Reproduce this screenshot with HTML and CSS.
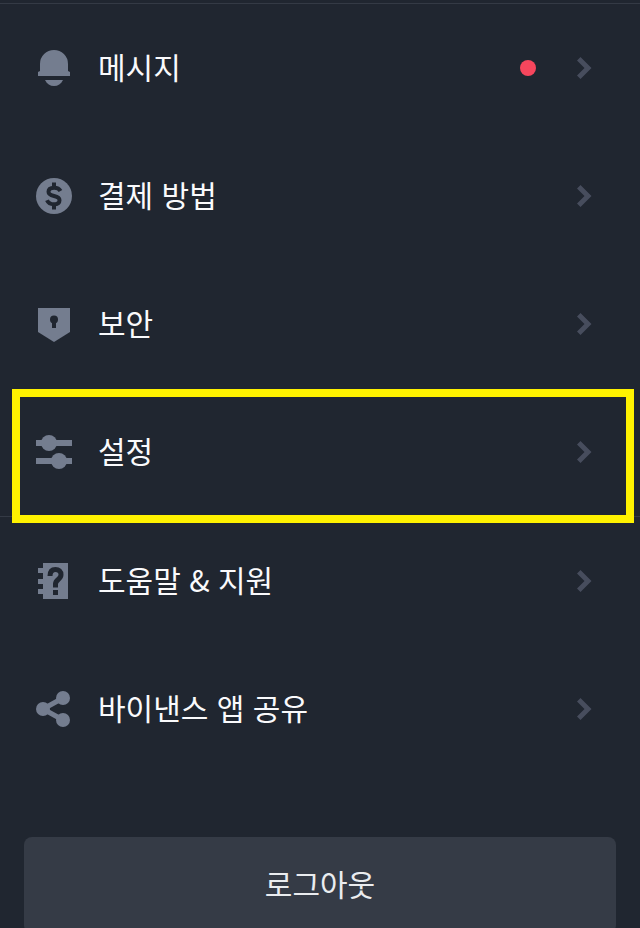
FILE: index.html
```html
<!DOCTYPE html>
<html lang="ko">
<head>
<meta charset="utf-8">
<meta name="viewport" content="width=device-width, initial-scale=1">
<title>메뉴</title>
<link rel="stylesheet" href="styles.css">
</head>
<body>
<main class="screen">
  <nav class="menu">
    <div class="group">
      <a class="row" href="#">
        <svg class="icon" viewBox="0 0 36 36" aria-hidden="true"><path d="M4 14a14 14 0 0 1 28 0v7l2 1v4H2v-4l2-1z"/><path d="M9 30h18c-2 4-5 6-9 6s-7-2-9-6z"/></svg>
        <span class="label">메시지</span>
        <span class="dot"></span>
        <svg class="chevron" viewBox="0 0 16 24" aria-hidden="true"><path d="M1 4.500 4.500 1l11 11-11 11L1 19.500 8.500 12z"/></svg>
      </a>
      <a class="row" href="#">
        <svg class="icon" viewBox="0 0 36 36" aria-hidden="true"><circle cx="18" cy="18" r="18"/><path class="cut-line thin" d="M24.500 13C23.300 10.700 21 9.700 18.200 9.700c-3.500 0-5.700 1.500-5.700 4 0 6 11 2.600 11 8.500 0 2.600-2.200 4.100-5.700 4.100-3.300 0-5.600-1.300-6.800-4"/><path class="cut" d="M16 4.500h4V9h-4zM16 27h4v4.500h-4z"/></svg>
        <span class="label">결제 방법</span>
        <svg class="chevron" viewBox="0 0 16 24" aria-hidden="true"><path d="M1 4.500 4.500 1l11 11-11 11L1 19.500 8.500 12z"/></svg>
      </a>
      <a class="row" href="#">
        <svg class="icon" viewBox="0 0 36 36" aria-hidden="true"><path d="M2 2h32v24L18 36 2 26z"/><circle class="cut" cx="18" cy="13.500" r="4"/><path class="cut" d="M16 14h4v8h-4z"/></svg>
        <span class="label">보안</span>
        <svg class="chevron" viewBox="0 0 16 24" aria-hidden="true"><path d="M1 4.500 4.500 1l11 11-11 11L1 19.500 8.500 12z"/></svg>
      </a>
      <a class="row highlighted" href="#">
        <svg class="icon" viewBox="0 0 36 36" aria-hidden="true"><path d="M0 6h36v6H0zM0 24h36v6H0z"/><circle cx="13" cy="9" r="8"/><circle cx="23" cy="27" r="8"/></svg>
        <span class="label">설정</span>
        <svg class="chevron" viewBox="0 0 16 24" aria-hidden="true"><path d="M1 4.500 4.500 1l11 11-11 11L1 19.500 8.500 12z"/></svg>
      </a>
    </div>
    <div class="group">
      <a class="row" href="#">
        <svg class="icon" viewBox="0 0 36 36" aria-hidden="true"><path d="M7 0h25v36H7v-5H2v-5h5v-5H2v-5h5v-6H2V5h5z"/><path class="cut-line" d="M14 13c0-4.500 2.200-6.500 5.500-6.500S25 8.500 25 11.800c0 4.700-5.500 4.700-5.500 9.200v3.500"/><path class="cut" d="M17 27h5v5h-5z"/></svg>
        <span class="label">도움말 &amp; 지원</span>
        <svg class="chevron" viewBox="0 0 16 24" aria-hidden="true"><path d="M1 4.500 4.500 1l11 11-11 11L1 19.500 8.500 12z"/></svg>
      </a>
      <a class="row" href="#">
        <svg class="icon" viewBox="0 0 36 36" aria-hidden="true"><path class="link" d="M27 7 7 18l20 11"/><circle cx="7" cy="18" r="7"/><circle cx="27" cy="7" r="7"/><circle cx="27" cy="29" r="7"/></svg>
        <span class="label">바이낸스 앱 공유</span>
        <svg class="chevron" viewBox="0 0 16 24" aria-hidden="true"><path d="M1 4.500 4.500 1l11 11-11 11L1 19.500 8.500 12z"/></svg>
      </a>
    </div>
  </nav>
  <button class="logout" type="button">로그아웃</button>
</main>
</body>
</html>
```
FILE: styles.css
```css
:root {
  --background: #202630;
  --surface: #353b46;
  --divider: #343a45;
  --icon: #747d8f;
  --chevron: #474d5d;
  --text: #fafafc;
}

* {
  box-sizing: border-box;
}

body {
  margin: 0;
  background: var(--background);
  color: var(--text);
  font-family: "Noto Sans CJK KR", "Noto Sans", sans-serif;
  font-size: 30px;
  line-height: 44px;
}

.screen {
  display: flex;
  flex-direction: column;
  height: 100vh;
  padding-top: 3px;
  overflow: hidden;
}

.group {
  border-top: 1px solid var(--divider);
}

.row {
  position: relative;
  display: flex;
  align-items: center;
  height: 128px;
  padding: 0 48px 0 36px;
  color: inherit;
  text-decoration: none;
}

.icon {
  flex: none;
  width: 36px;
  height: 36px;
  margin-right: 26px;
  fill: var(--icon);
}

.cut {
  fill: var(--background);
}

.cut-line {
  fill: none;
  stroke: var(--background);
  stroke-width: 5;
}

.cut-line.thin {
  stroke-width: 4;
}

.link {
  fill: none;
  stroke: var(--icon);
  stroke-width: 5;
}

.label {
  flex: 1;
  padding-bottom: 4px;
}

.dot {
  width: 16px;
  height: 16px;
  margin-right: 40px;
  border-radius: 50%;
  background: #f6465d;
}

.chevron {
  flex: none;
  width: 16px;
  height: 24px;
  fill: var(--chevron);
}

/* Frame drawn over the row and the divider below it */
.highlighted::after {
  content: "";
  position: absolute;
  z-index: 1;
  inset: 1px 6px -7px 12px;
  border: 8px solid #fff200;
  pointer-events: none;
}

.logout {
  flex: none;
  height: 96px;
  margin: 64px 24px 0;
  padding: 0 0 4px;
  border: 0;
  border-radius: 8px;
  background: var(--surface);
  color: #eaecef;
  font: inherit;
}
```
